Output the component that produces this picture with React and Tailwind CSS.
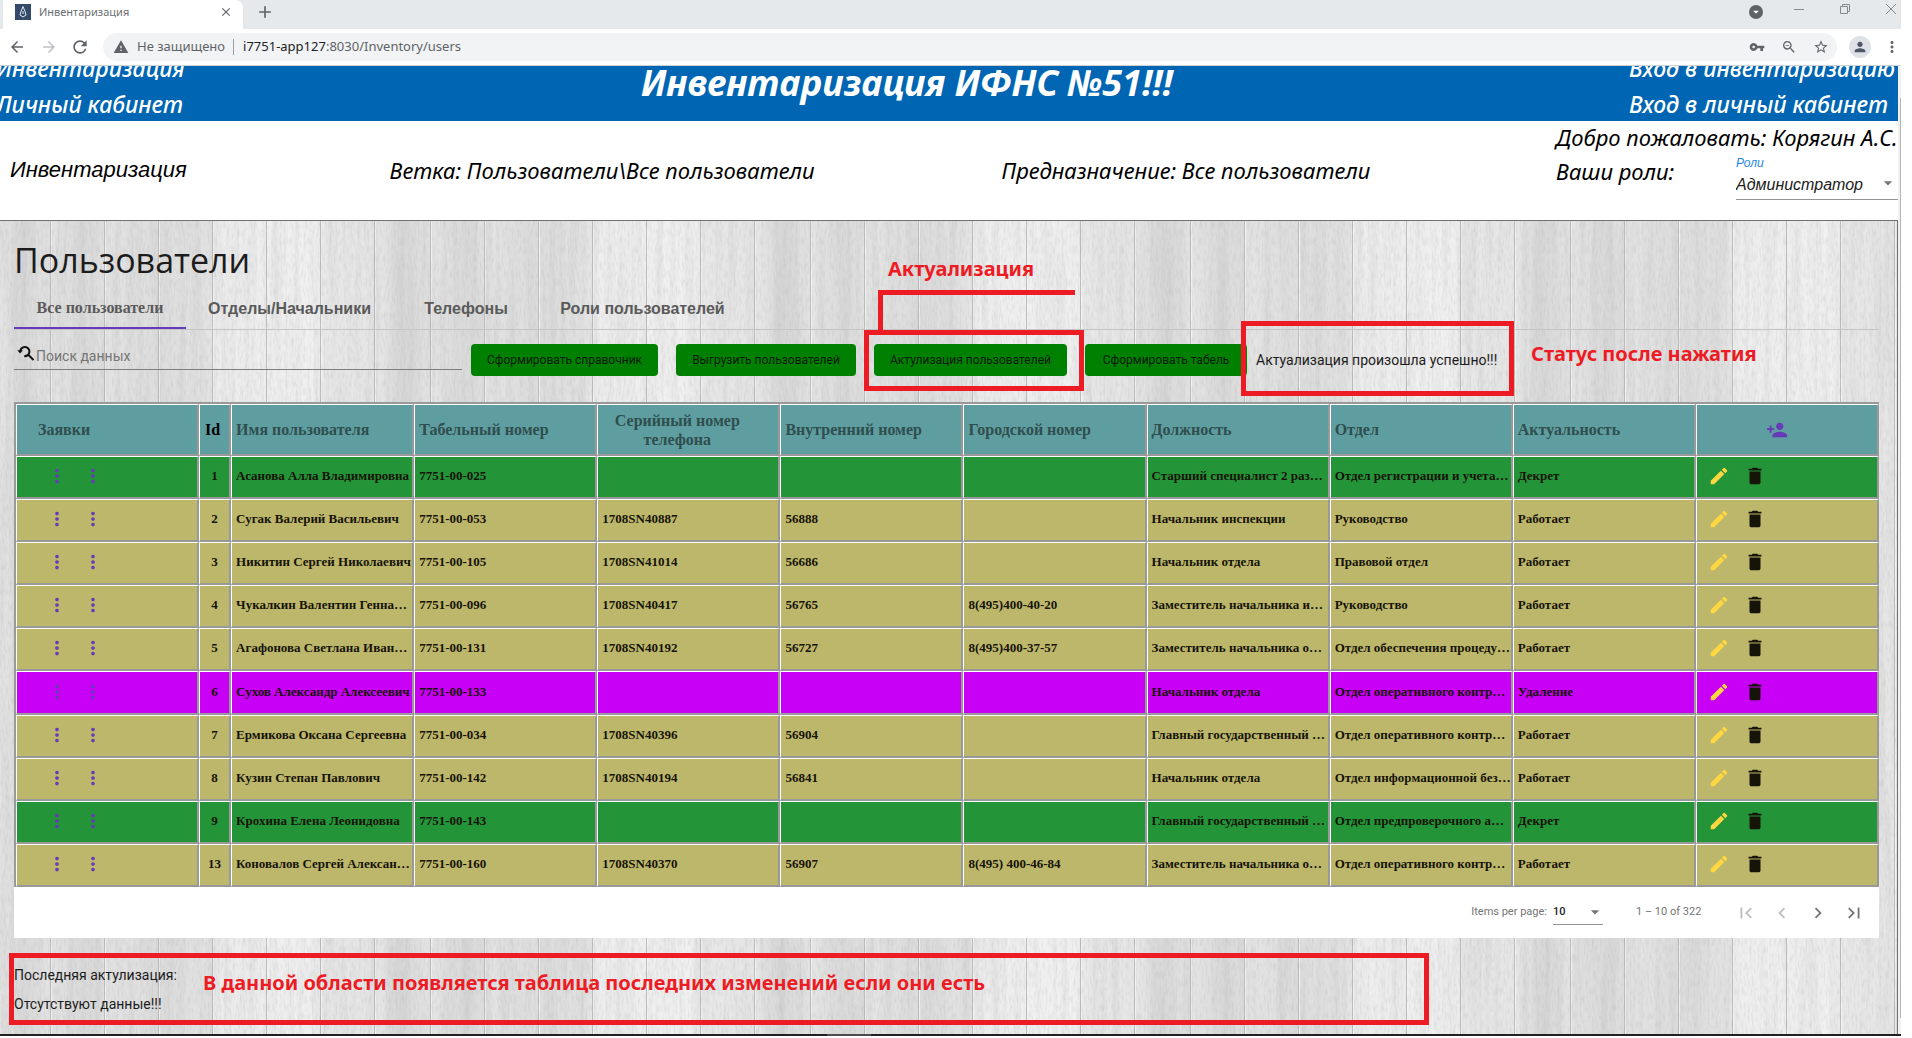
import React from "react";
import {
  MdMoreVert,
  MdEdit,
  MdDelete,
  MdPersonAdd,
  MdFirstPage,
  MdChevronLeft,
  MdChevronRight,
  MdLastPage,
  MdArrowDropDown,
  MdArrowBack,
  MdArrowForward,
  MdRefresh,
  MdWarning,
  MdVpnKey,
  MdStarBorder,
  MdPerson,
  MdZoomOut,
  MdClose,
  MdAdd,
} from "react-icons/md";

const users = [
  [1, "Асанова Алла Владимировна", "7751-00-025", "", "", "", "Старший специалист 2 раз…", "Отдел регистрации и учета…", "Декрет"],
  [2, "Сугак Валерий Васильевич", "7751-00-053", "1708SN40887", "56888", "", "Начальник инспекции", "Руководство", "Работает"],
  [3, "Никитин Сергей Николаевич", "7751-00-105", "1708SN41014", "56686", "", "Начальник отдела", "Правовой отдел", "Работает"],
  [4, "Чукалкин Валентин Генна…", "7751-00-096", "1708SN40417", "56765", "8(495)400-40-20", "Заместитель начальника и…", "Руководство", "Работает"],
  [5, "Агафонова Светлана Иван…", "7751-00-131", "1708SN40192", "56727", "8(495)400-37-57", "Заместитель начальника о…", "Отдел обеспечения процеду…", "Работает"],
  [6, "Сухов Александр Алексеевич", "7751-00-133", "", "", "", "Начальник отдела", "Отдел оперативного контр…", "Удаление"],
  [7, "Ермикова Оксана Сергеевна", "7751-00-034", "1708SN40396", "56904", "", "Главный государственный …", "Отдел оперативного контр…", "Работает"],
  [8, "Кузин Степан Павлович", "7751-00-142", "1708SN40194", "56841", "", "Начальник отдела", "Отдел информационной без…", "Работает"],
  [9, "Крохина Елена Леонидовна", "7751-00-143", "", "", "", "Главный государственный …", "Отдел предпроверочного а…", "Декрет"],
  [13, "Коновалов Сергей Алексан…", "7751-00-160", "1708SN40370", "56907", "8(495) 400-46-84", "Заместитель начальника о…", "Отдел оперативного контр…", "Работает"],
];

const rowColors = {
  Декрет: "bg-[#249439]",
  Работает: "bg-[#bdb76b]",
  Удаление: "bg-[#c800f5]",
};

const headings = [
  "Имя пользователя",
  "Табельный номер",
  "Серийный номер телефона",
  "Внутренний номер",
  "Городской номер",
  "Должность",
  "Отдел",
  "Актуальность",
];

const cell = "border-t border-l border-r-2 border-b-2 border-t-white border-l-white border-r-[#999] border-b-[#999]";

function BrowserChrome() {
  return (
    <div className="font-['Noto_Sans',sans-serif]">
      <div className="flex h-[29px] items-stretch bg-[#e5e9ec] pl-[3px]">
        <div className="flex w-[240px] items-center rounded-tr-lg bg-white pr-2.5 pb-1.5 pl-3">
          <svg viewBox="0 0 16 16" className="size-4 shrink-0" aria-hidden="true">
            <rect width="16" height="16" fill="#334a6b" />
            <path d="M8 2.5 10 7.5 11 11 8 13 5 11 6 7.5Z" fill="none" stroke="#e6ebf2" strokeWidth="1" />
            <path d="M8 7v3" stroke="#e6ebf2" />
          </svg>
          <span className="ml-2 flex-1 text-[11px] leading-4 text-[#6b6f73]">Инвентаризация</span>
          <button type="button" aria-label="Закрыть вкладку" className="text-[#5f6368]">
            <MdClose className="size-3.5" />
          </button>
        </div>
        <button type="button" aria-label="Новая вкладка" className="ml-3 pb-1.5 text-[#5f6368]">
          <MdAdd className="size-5" />
        </button>
        <div className="ml-auto flex items-center gap-[34px] pb-3 text-[#85898d]">
          <span className="mt-1.5 -mr-1 flex size-3.5 items-center justify-center rounded-full bg-[#5f6368] text-white">
            <MdArrowDropDown className="size-3.5" />
          </span>
          <button type="button" aria-label="Свернуть">
            <svg viewBox="0 0 12 12" className="size-3" fill="none" stroke="currentColor">
              <path d="M1 6.5h10" />
            </svg>
          </button>
          <button type="button" aria-label="Развернуть">
            <svg viewBox="0 0 12 12" className="size-3" fill="none" stroke="currentColor">
              <path d="M1.5 3.5h7v7h-7zM3.5 3.5v-2h7v7h-2" />
            </svg>
          </button>
          <button type="button" aria-label="Закрыть" className="mr-1">
            <svg viewBox="0 0 12 12" className="size-3" fill="none" stroke="currentColor">
              <path d="m1 1 10 10M11 1 1 11" />
            </svg>
          </button>
        </div>
      </div>
      <div className="flex h-[37px] items-center border-b border-[#cfd2d5] bg-white pl-2 text-[#5f6368]">
        <button type="button" aria-label="Назад"><MdArrowBack className="size-[18px]" /></button>
        <button type="button" aria-label="Вперёд" className="ml-3.5 text-[#bdc1c6]"><MdArrowForward className="size-[18px]" /></button>
        <button type="button" aria-label="Обновить" className="ml-3"><MdRefresh className="size-5" /></button>
        <div className="ml-[13px] flex h-7 flex-1 items-center rounded-full bg-[#f1f3f4] pr-2 pl-2.5">
          <MdWarning className="size-4" />
          <span className="ml-2 text-[13px]">Не защищено</span>
          <span className="ml-2 mr-[9px] h-4 w-px bg-[#9aa0a6]" />
          <span className="text-[13px]">
            <span className="text-[#202124]">i7751-app127</span>:8030/Inventory/users
          </span>
          <div className="ml-auto flex items-center gap-4">
            <MdVpnKey className="size-4" />
            <MdZoomOut className="size-4" />
            <MdStarBorder className="size-4" />
          </div>
        </div>
        <span className="ml-3 flex size-[22px] items-center justify-center rounded-full bg-[#dee1e6] text-[#4d5668]">
          <MdPerson className="size-4" />
        </span>
        <button type="button" aria-label="Меню" className="ml-3"><MdMoreVert className="size-[18px]" /></button>
      </div>
    </div>
  );
}

function Banner() {
  return (
    <div className="flex h-[55px] items-end overflow-hidden bg-[#0066b3] font-['Noto_Sans',sans-serif] font-medium text-white italic">
      <div className="-ml-1 flex-1 text-[23px] leading-9">
        <a href="#inventory" className="block">Инвентаризация</a>
        <a href="#cabinet" className="-mb-px block">Личный кабинет</a>
      </div>
      <h1 className="mr-20 mb-3.5 text-[36px] leading-[48px] font-bold">Инвентаризация ИФНС №51!!!</h1>
      <div className="flex flex-1 justify-end">
        <div className="w-[269px] text-[23px] leading-9 whitespace-nowrap">
          <a href="#login-inventory" className="block">Вход в инвентаризацию</a>
          <a href="#login-cabinet" className="-mb-px block">Вход в личный кабинет</a>
        </div>
      </div>
    </div>
  );
}

function InfoBar() {
  return (
    <div className="flex h-[99px] items-start bg-white font-['Noto_Sans',sans-serif] text-[22px] leading-8 text-black italic">
      <p className="mt-[33px] ml-2.5 w-[20%] font-['Liberation_Sans',sans-serif]">Инвентаризация</p>
      <p className="mt-[33px] w-[612px]">Ветка: Пользователи\Все пользователи</p>
      <p className="mt-[33px]">Предназначение: Все пользователи</p>
      <div className="ml-auto w-[342px]">
        <p className="h-[34px] whitespace-nowrap">Добро пожаловать: Корягин А.С.</p>
        <div className="flex items-start justify-between">
          <p>Ваши роли:</p>
          <div className="relative w-[162px] border-b border-[#949494] font-['Liberation_Sans',sans-serif]">
            <label htmlFor="role" className="block text-xs leading-4 text-[#1e88e5]">Роли</label>
            <select id="role" className="my-1 block h-5 w-full appearance-none bg-transparent text-base leading-5 text-[#212121] italic">
              <option>Администратор</option>
            </select>
            <MdArrowDropDown className="pointer-events-none absolute right-0 bottom-1.5 size-5 text-[#757575]" />
          </div>
        </div>
      </div>
    </div>
  );
}

/* Whitewashed planks: a repeating run of boards with a fine vertical grain over it. */
function WoodBackground() {
  return (
    <svg className="absolute inset-0 h-full w-full" aria-hidden="true">
      <defs>
        <filter id="grain" x="0" y="0" width="100%" height="100%">
          <feTurbulence type="fractalNoise" baseFrequency="0.14 0.006" numOctaves="4" seed="7" />
          <feColorMatrix values="0 0 0 0 0.4  0 0 0 0 0.4  0 0 0 0 0.4  0.4 0 0 0 -0.15" />
        </filter>
        <filter id="grit" x="0" y="0" width="100%" height="100%">
          <feTurbulence type="fractalNoise" baseFrequency="0.5 0.12" numOctaves="2" seed="3" />
          <feColorMatrix values="0 0 0 0 0.4  0 0 0 0 0.4  0 0 0 0 0.4  0.5 0 0 0 -0.21" />
        </filter>
        <linearGradient id="boards">
          <stop offset="0" stopColor="#e6e6e6" />
          <stop offset="0.06" stopColor="#d8d8d8" />
          <stop offset="0.14" stopColor="#e5e5e5" />
          <stop offset="0.22" stopColor="#dadada" />
          <stop offset="0.3" stopColor="#e4e4e4" />
          <stop offset="0.4" stopColor="#dedede" />
          <stop offset="0.54" stopColor="#e2e2e2" />
          <stop offset="0.58" stopColor="#eeeeee" />
          <stop offset="0.82" stopColor="#f1f1f1" />
          <stop offset="0.86" stopColor="#e8e8e8" />
          <stop offset="1" stopColor="#e6e6e6" />
        </linearGradient>
        <pattern id="planks" width="380" height="900" patternUnits="userSpaceOnUse">
          <rect width="380" height="900" fill="url(#boards)" />
          {[50, 104, 158, 212, 266, 320, 374].map((x) => (
            <g key={x}>
              <rect x={x} width="1" height="900" fill="#bcbcbc" />
              <rect x={x + 1} width="1" height="900" fill="#f5f5f5" />
            </g>
          ))}
        </pattern>
      </defs>
      <rect width="100%" height="100%" fill="url(#planks)" />
      <rect width="100%" height="100%" filter="url(#grain)" />
      <rect width="100%" height="100%" filter="url(#grit)" />
    </svg>
  );
}

function Tabs() {
  const tab = "pb-0.5 text-base leading-6 font-bold text-[#5a5a5a]";
  return (
    <div role="tablist" className="flex h-10 border-b border-[#c4c4c4] font-['Liberation_Sans',sans-serif]">
      <button type="button" role="tab" aria-selected="true" className={`${tab} w-[172px] border-b-2 border-[#673ab7] font-['Liberation_Serif',serif]`}>
        Все пользователи
      </button>
      <button type="button" role="tab" aria-selected="false" className={`${tab} w-[207px]`}>Отделы/Начальники</button>
      <button type="button" role="tab" aria-selected="false" className={`${tab} w-[146px]`}>Телефоны</button>
      <button type="button" role="tab" aria-selected="false" className={`${tab} w-[207px]`}>Роли пользователей</button>
    </div>
  );
}

function Toolbar() {
  const button = "h-8 rounded bg-[#008000] text-[12px] text-[#0b1a0b]";
  return (
    <div className="mt-3.5 flex h-[58px] items-start font-['Roboto',sans-serif]">
      <label className="flex h-[26px] w-[448px] items-start border-b border-[#7d7d7d]">
        <svg viewBox="0 0 18 18" className="ml-[3px] size-[18px] shrink-0" fill="none" stroke="#111" strokeWidth="2" aria-hidden="true">
          <path d="M3.2 7.5a4.6 4.6 0 1 1 4 4.6M11 10.5l5.5 5.5" />
          <path d="M.3 6.2h5.6L3.1 9.4Z" fill="#111" stroke="none" />
        </svg>
        <span className="sr-only">Поиск данных</span>
        <input
          type="text"
          placeholder="Поиск данных"
          className="ml-px h-6 flex-1 bg-transparent text-sm outline-none placeholder:text-[#757575]"
        />
      </label>
      <button type="button" className={`${button} ml-[9px] w-[187px]`}>Сформировать справочник</button>
      <button type="button" className={`${button} ml-[18px] w-[180px]`}>Выгрузить пользователей</button>
      <button type="button" className={`${button} ml-[18px] w-[193px]`}>Актулизация пользователей</button>
      <button type="button" className={`${button} ml-[18px] w-[162px]`}>Сформировать табель</button>
      <p className="ml-[9px] text-sm leading-8 text-[#1c1c1c]">Актуализация произошла успешно!!!</p>
    </div>
  );
}

function UsersTable() {
  return (
    <table className="h-[485px] w-full table-fixed border-separate border-spacing-0 border-t-2 border-l-2 border-[#999] font-['Liberation_Serif',serif] font-bold">
      <colgroup>
        <col />
        <col className="w-8" />
        {headings.map((h) => <col key={h} />)}
        <col />
      </colgroup>
      <thead>
        <tr className="h-[52px] bg-[#5f9ea0] text-left text-base leading-[19px] text-[#2f4e4f]">
          <th scope="col" className={`${cell} pl-[21px]`}>Заявки</th>
          <th scope="col" className={`${cell} pr-1 text-center text-black`}>Id</th>
          {headings.map((h) => (
            <th key={h} scope="col" className={`${cell} ${h.startsWith("Серийный") ? "pr-[22px] text-center" : "pl-1"}`}>
              {h}
            </th>
          ))}
          <th scope="col" className={cell}>
            <button type="button" aria-label="Добавить пользователя" className="ml-[69px] block text-[#673ab7]">
              <MdPersonAdd className="size-[22px]" />
            </button>
          </th>
        </tr>
      </thead>
      <tbody>
        {users.map(([id, ...fields]) => (
          <tr key={id} className={`h-[43px] text-[13px] leading-4 text-[#161308] ${rowColors[fields[7]]}`}>
            <td className={`${cell} pb-0.5`}>
              <div className="flex gap-3.5 pl-[29px] text-[#673ab7]">
                <button type="button" aria-label="Заявка"><MdMoreVert className="size-[22px]" /></button>
                <button type="button" aria-label="Заявки пользователя"><MdMoreVert className="size-[22px]" /></button>
              </div>
            </td>
            <td className={`${cell} pb-0.5 text-center`}>{id}</td>
            {fields.map((f, i) => (
              <td key={i} className={`${cell} overflow-hidden pb-0.5 pl-1 whitespace-nowrap`}>{f}</td>
            ))}
            <td className={`${cell} pb-0.5`}>
              <div className="flex gap-3.5 pl-[11px]">
                <button type="button" aria-label="Изменить" className="text-[#ffd740]"><MdEdit className="size-[22px]" /></button>
                <button type="button" aria-label="Удалить" className="text-[#161308]"><MdDelete className="size-[22px]" /></button>
              </div>
            </td>
          </tr>
        ))}
      </tbody>
    </table>
  );
}

function Paginator() {
  return (
    <div className="flex h-[51px] items-center justify-end bg-white pr-3.5 font-['Roboto',sans-serif] text-[11px] text-[#757575]">
      <label htmlFor="page-size">Items per page:</label>
      <div className="relative ml-1.5 w-[50px] border-b border-[#949494]">
        <select id="page-size" className="block h-6 w-full appearance-none bg-transparent text-[11px] font-medium text-[#212121]">
          <option>10</option>
        </select>
        <MdArrowDropDown className="pointer-events-none absolute top-0.5 -right-0.5 size-5" />
      </div>
      <span className="ml-[33px] w-[99px]">1 – 10 of 322</span>
      <div className="flex gap-[14px]">
        <button type="button" aria-label="First page" disabled className="text-[#bdbdbd]"><MdFirstPage className="size-[22px]" /></button>
        <button type="button" aria-label="Previous page" disabled className="text-[#bdbdbd]"><MdChevronLeft className="size-[22px]" /></button>
        <button type="button" aria-label="Next page"><MdChevronRight className="size-[22px]" /></button>
        <button type="button" aria-label="Last page"><MdLastPage className="size-[22px]" /></button>
      </div>
    </div>
  );
}

/* Red mark-up laid over the page to point out its parts. */
function Annotations() {
  const frame = "absolute border-5 border-[#ed1c24]";
  const note = "absolute text-[20px] leading-7 font-bold whitespace-nowrap text-[#ed1c24]";
  return (
    <div className="pointer-events-none absolute inset-0 font-['Noto_Sans',sans-serif]">
      <p className={`${note} top-[34px] left-[888px]`}>Актуализация</p>
      <div className="absolute top-[69px] left-[878px] h-[40px] w-[197px] border-t-5 border-l-5 border-[#ed1c24]" />
      <div className={`${frame} top-[109px] left-[864px] h-[61px] w-[220px]`} />
      <div className={`${frame} top-[100px] left-[1241px] h-[75px] w-[273px]`} />
      <p className={`${note} top-[119px] left-[1531px]`}>Статус после нажатия</p>
      <div className={`${frame} top-[732px] left-[9px] h-[72px] w-[1420px]`} />
      <p className={`${note} top-[748px] left-[203px]`}>
        В данной области появляется таблица последних изменений если они есть
      </p>
    </div>
  );
}

export default function App() {
  return (
    <div className="bg-white pr-[11px]">
      <BrowserChrome />
      <div className="flex">
        <div className="min-w-0 flex-1">
          <Banner />
          <InfoBar />
          <main className="relative isolate border-t border-r border-[#6f736f] pr-[18px] pl-3.5">
            <div className="absolute inset-0 -z-10 overflow-hidden">
              <WoodBackground />
            </div>
            <h2 className="pt-[15px] font-['Open_Sans',sans-serif] text-[34px] leading-[48px] font-medium text-[#1c1c1c]">Пользователи</h2>
            <div className="mt-1.5"><Tabs /></div>
            <Toolbar />
            <UsersTable />
            <Paginator />
            <section className="h-24 pt-[23px] font-['Roboto',sans-serif] text-sm leading-[29px] text-[#1c1c1c]">
              <p>Последняя актулизация:</p>
              <p>Отсутствуют данные!!!</p>
            </section>
            <Annotations />
          </main>
        </div>
        <div className="w-[3px] bg-[#f1f1f1] pt-8 pb-4">
          <div className="ml-auto h-full w-px bg-[#b5b5b5]" />
        </div>
      </div>
      <div className="h-0.5 bg-[#1f2123] pl-[827px]">
        <div className="h-full w-11 bg-[#4a4c4e]" />
      </div>
    </div>
  );
}
